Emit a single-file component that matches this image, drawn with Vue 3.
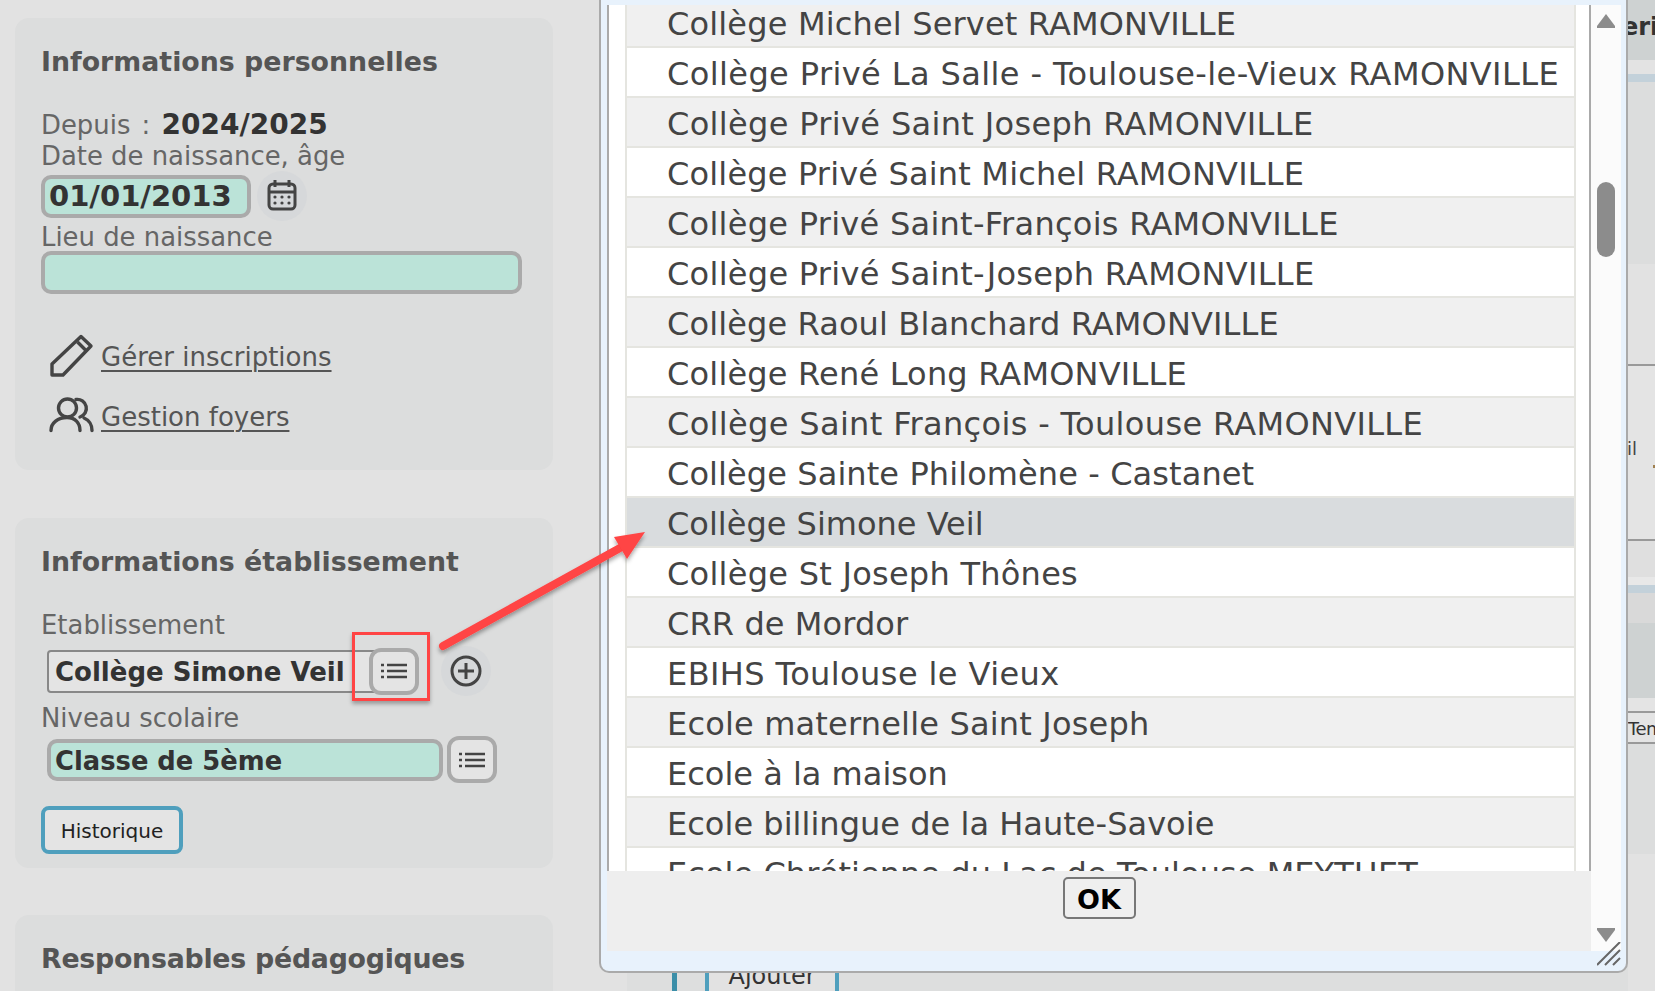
<script setup>
const rows = [
  ['Collège Michel Servet RAMONVILLE', 0.165],
  ['Collège Privé La Salle - Toulouse-le-Vieux RAMONVILLE', 0.4],
  ['Collège Privé Saint Joseph RAMONVILLE', 0.34],
  ['Collège Privé Saint Michel RAMONVILLE', 0.17],
  ['Collège Privé Saint-François RAMONVILLE', 0.27],
  ['Collège Privé Saint-Joseph RAMONVILLE', 0.28],
  ['Collège Raoul Blanchard RAMONVILLE', 0.12],
  ['Collège René Long RAMONVILLE', 0.19],
  ['Collège Saint François - Toulouse RAMONVILLE', 0.34],
  ['Collège Sainte Philomène - Castanet', 0.09],
  ['Collège Simone Veil', 0],
  ['Collège St Joseph Thônes', 0.26],
  ['CRR de Mordor', 0.1],
  ['EBIHS Toulouse le Vieux', 0.41],
  ['Ecole maternelle Saint Joseph', 0.18],
  ['Ecole à la maison', 0],
  ['Ecole billingue de la Haute-Savoie', 0.03],
  ['Ecole Chrétienne du Lac de Toulouse MEYTHET', 0.05]
].map(([name, spacing]) => ({ name, spacing }))
const selected = 'Collège Simone Veil'
</script>

<template>
  <div class="page">
    <aside class="left">
      <section class="card card-perso">
        <h2>Informations personnelles</h2>
        <div class="line depuis">Depuis : <b>2024/2025</b></div>
        <div class="line naissance">Date de naissance, âge</div>
        <div class="date-row">
          <div class="input green date">01/01/2013</div>
          <span class="round">
            <svg width="30" height="32" viewBox="0 1 30 32" fill="none" stroke="#444" stroke-width="3">
              <rect x="2" y="5" width="26" height="25" rx="4" />
              <path d="M8 1v7M22 1v7M2 13h26" />
              <g stroke="none" fill="#444">
                <circle cx="8" cy="18" r="1.6" /><circle cx="15" cy="18" r="1.6" /><circle cx="22" cy="18" r="1.6" />
                <circle cx="8" cy="24" r="1.6" /><circle cx="15" cy="24" r="1.6" /><circle cx="22" cy="24" r="1.6" />
              </g>
            </svg>
          </span>
        </div>
        <div class="line lieu">Lieu de naissance</div>
        <div class="input green wide"></div>
        <div class="link first">
          <svg width="48" height="48" viewBox="0 1 48 48" fill="none" stroke="#444" stroke-width="3.4" stroke-linejoin="round">
            <path d="M4 43V32L33 4.500L43 14L15 43Z" />
            <path d="M29.500 10L38 18.500" />
          </svg>
          <a>Gérer inscriptions</a>
        </div>
        <div class="link">
          <svg width="48" height="48" viewBox="0 -3 48 48" fill="none" stroke="#444" stroke-width="3.400" stroke-linecap="round">
            <circle cx="19.500" cy="12" r="9" />
            <path d="M3 34.500C3 27 10 21.500 19 21.500C27 21.500 32 27 32 34.500" />
            <path d="M28 3.500A9 9 0 0 1 32 21" />
            <path d="M36 22C41 24 44 29 44 34.500" />
          </svg>
          <a>Gestion foyers</a>
        </div>
      </section>

      <section class="card card-etab">
        <h2>Informations établissement</h2>
        <div class="line etab-label">Etablissement</div>
        <div class="etab-row">
          <div class="input plain">Collège Simone Veil</div>
          <button class="list-btn overlap">
            <svg width="26" height="16" viewBox="0 0 26 16" stroke="#444" stroke-width="2.400" fill="none">
              <path d="M6 2h20M6 8h20M6 14h20M0 2h3M0 8h3M0 14h3" />
            </svg>
          </button>
          <span class="round plus">
            <svg width="32" height="32" viewBox="0 0 32 32" fill="none" stroke="#444" stroke-width="3">
              <circle cx="16" cy="16" r="14" /><path d="M16 8v16M8 16h16" />
            </svg>
          </span>
        </div>
        <div class="line niveau">Niveau scolaire</div>
        <div class="niveau-row">
          <div class="input green level">Classe de 5ème</div>
          <button class="list-btn">
            <svg width="26" height="16" viewBox="0 0 26 16" stroke="#444" stroke-width="2.400" fill="none">
              <path d="M6 2h20M6 8h20M6 14h20M0 2h3M0 8h3M0 14h3" />
            </svg>
          </button>
        </div>
        <button class="histo">Historique</button>
      </section>

      <section class="card card-resp">
        <h2>Responsables pédagogiques</h2>
      </section>
    </aside>

    <main class="center">
      <div class="ajouter-row">
        <span class="teal"></span>
        <button class="ajouter">Ajouter</button>
      </div>
    </main>

    <div class="strip">
      <div class="b b1"><b>eri</b></div>
      <div class="b b2"></div>
      <div class="b b3"></div>
      <div class="b b4"></div>
      <div class="b b5"></div>
      <div class="b b6"><span class="il">il</span><i class="tick"></i></div>
      <div class="b b7"></div>
      <div class="b b8"></div>
      <div class="b b3"></div>
      <div class="b b9"></div>
      <div class="b b10"></div>
      <div class="b b11"></div>
      <div class="b b12">Tem</div>
      <div class="b b13"></div>
      <div class="b b14"></div>
    </div>

    <div class="modal">
      <div class="modal-main">
        <div class="list-box">
          <ul class="rows">
            <li
              v-for="r in rows"
              :key="r.name"
              :class="{ sel: r.name === selected }"
              :style="{ letterSpacing: r.spacing + 'px' }"
            >{{ r.name }}</li>
          </ul>
        </div>
        <div class="footer"><button class="ok">OK</button></div>
      </div>
      <div class="scroll">
        <span class="tri up"></span>
        <span class="thumb"></span>
        <span class="tri down"></span>
      </div>
      <svg class="grip" width="24" height="24" viewBox="0 0 24 24" stroke="#666" stroke-width="2">
        <path d="M0 23L23 0M8 23L23 8M16 23L23 16" />
      </svg>
    </div>

    <div class="red-box"></div>
    <svg class="arrow" width="240" height="150" viewBox="0 0 240 150">
      <defs>
        <filter id="sh" x="-10%" y="-10%" width="120%" height="130%">
          <feDropShadow dx="0" dy="3" stdDeviation="2" flood-color="#000" flood-opacity="0.35" />
        </filter>
      </defs>
      <g filter="url(#sh)" fill="#ff4444">
        <path d="M13 136L190 38" stroke="#ff4444" stroke-width="8" stroke-linecap="round" fill="none" />
        <path d="M215 22L184 27L197 49Z" />
      </g>
    </svg>
  </div>
</template>

<style>
html, body { margin: 0; padding: 0; background: #e2e2e2; }
</style>

<style scoped>
.page {
  position: relative;
  width: 1655px;
  height: 991px;
  overflow: hidden;
  display: flex;
  background: #e2e2e2;
  font-family: "DejaVu Sans", sans-serif;
  color: #666;
}
.left { width: 627px; flex: none; padding: 18px 0 0 15px; box-sizing: border-box; }
.card {
  width: 538px;
  background: #dcdddd;
  border-radius: 14px;
  box-sizing: border-box;
  padding: 26px 26px 0;
}
.card-perso { height: 452px; margin-bottom: 48px; }
.card-etab { height: 350px; margin-bottom: 47px; }
.card-resp { height: 200px; }
h2 { margin: 0; font-size: 26.8px; line-height: 36px; font-weight: 700; color: #555; }
.card-resp h2 { letter-spacing: -0.25px; }
.line { font-size: 25.9px; line-height: 32px; color: #666; }
.depuis { margin-top: 29px; word-spacing: 3px; }
.depuis b { color: #333; font-size: 28px; }
.naissance { line-height: 30px; }
.input {
  box-sizing: border-box;
  border: 4px solid #aaa;
  border-radius: 10px;
  font-weight: 700;
  font-size: 27px;
  color: #333;
}
.green { background: #bbe3d8; }
.date-row { display: flex; align-items: center; height: 50px; }
.date { width: 210px; height: 43px; line-height: 35px; padding-left: 4px; font-size: 29px; white-space: nowrap; }
.round {
  width: 50px; height: 50px; border-radius: 50%; background: #d6d8da;
  display: flex; align-items: center; justify-content: center; flex: none;
  margin-left: 6px;
}
.lieu { line-height: 30px; padding-top: 1px; margin-bottom: -1px; }
.wide { width: 481px; height: 43px; }
.link { display: flex; align-items: center; height: 48px; padding-left: 7px; font-size: 26px; }
.link a { text-decoration: underline; color: #555; margin-left: 5px; text-underline-offset: 4px; text-decoration-thickness: 2px; }
.link.first { margin-top: 39px; margin-bottom: 12px; }

.etab-label { margin-top: 29px; }
.etab-row { display: flex; align-items: center; padding-left: 6px; height: 50px; margin-top: 5px; }
.plain {
  width: 340px; height: 43px; border: 2px solid #888; border-radius: 4px;
  background: #e4e4e4; padding-left: 6px; line-height: 40px; font-size: 26px;
}
.list-btn {
  box-sizing: border-box; width: 50px; height: 47px; padding: 0;
  border: 4px solid #aaa; border-radius: 12px; background: #e4e4e4;
  display: flex; align-items: center; justify-content: center; flex: none;
}
.overlap { margin-left: -18px; position: relative; }
.plus { margin-left: 22px; }
.niveau { margin-top: 6px; }
.niveau-row { display: flex; align-items: center; padding-left: 6px; height: 47px; margin-top: 2px; gap: 4px; }
.level { width: 396px; height: 42px; line-height: 36px; padding-left: 4px; font-size: 25.8px; }
.histo {
  display: block; margin-top: 23px; width: 142px; height: 48px; box-sizing: border-box;
  border: 4px solid #4f9fbd; border-radius: 8px; background: #e4e4e4;
  font-family: "DejaVu Sans", sans-serif; font-size: 20px; color: #222; padding: 2px 0 0;
}

.center { flex: 1; background: #dddede; position: relative; display: flex; flex-direction: column; justify-content: flex-end; }
.ajouter-row { display: flex; height: 60px; margin-bottom: -20px; align-items: stretch; }
.teal { width: 5px; background: #3b8ea8; margin-left: 45px; }
.ajouter {
  margin-left: 28px; width: 134px; box-sizing: border-box; border: 4px solid #4f9fbd; border-bottom: 0;
  border-radius: 0; background: #e2e2e2; font-family: "DejaVu Sans", sans-serif; font-size: 24px; color: #333;
  padding: 0 0 14px;
}

.strip { width: 27px; flex: none; overflow: hidden; }
.b { box-sizing: border-box; white-space: nowrap; position: relative; }
.b1 { height: 60px; background: #ced2d2; font-size: 24px; color: #333; line-height: 54px; text-indent: -6px; }
.b2 { height: 14px; background: #e3e3e3; }
.b3 { height: 8px; background: #c3d1da; }
.b4 { height: 182px; background: #dcdddd; }
.b5 { height: 102px; background: #e2e2e2; border-bottom: 2px solid #999; }
.b6 { height: 175px; background: #e4e4e4; border-bottom: 2px solid #999; font-size: 18px; color: #444; }
.il { position: absolute; left: -1px; top: 72px; }
.tick { position: absolute; right: 0; top: 99px; width: 2px; height: 3px; background: #a08050; }
.b7 { height: 36px; background: #dfdfdf; }
.b8 { height: 8px; background: #e8e8e8; }
.b9 { height: 30px; background: #d9d9d9; }
.b10 { height: 75px; background: #ced2d2; }
.b11 { height: 15px; background: #e4e4e4; border-bottom: 2px solid #999; }
.b12 { height: 31px; background: #e4e4e4; border-bottom: 2px solid #999; font-size: 18px; line-height: 31px; color: #333; letter-spacing: -0.5px; }
.b13 { height: 110px; background: #dcdddd; }
.b14 { height: 137px; background: #e2e2e2; }

.modal {
  position: absolute; left: 599px; top: 0; width: 1029px; height: 973px;
  box-sizing: border-box; display: flex;
  border: 2px solid #aaa; border-top: 0; border-radius: 0 0 10px 10px;
  background: #e8f2fc; padding: 5px 5px 20px 6px;
}
.modal-main { width: 984px; display: flex; flex-direction: column; flex: none; }
.list-box {
  flex: 1; min-height: 0; overflow: hidden; background: #fff;
  border-left: 2px solid #aaa; border-right: 2px solid #aaa; padding: 0 13px 0 16px;
}
.rows {
  list-style: none; margin: -7px 0 0; padding: 0;
  border-left: 2px solid #e5e5e0; border-right: 2px solid #e5e5e0;
}
.rows li {
  box-sizing: border-box; height: 50px; line-height: 48px; padding: 2px 0 0 40px;
  border-bottom: 2px solid #e5e5e0; background: #fff;
  font-size: 32px; color: #444; white-space: nowrap;
}
.rows li:nth-child(odd) { background: #f0f0f0; }
.rows li.sel { background: #d9dcde; }
.footer {
  height: 80px; flex: none; background: #eee; display: flex; justify-content: center; align-items: flex-start;
  padding-top: 6px; box-sizing: border-box;
}
.ok {
  width: 73px; height: 42px; box-sizing: border-box; border: 2px solid #777; border-radius: 5px;
  background: #efefef; font-family: "DejaVu Sans", sans-serif; font-weight: 700; font-size: 27px; color: #000; padding: 2px 0 0;
}
.scroll {
  flex: 1; background: #fbfbfb; position: relative; display: flex; flex-direction: column; align-items: center;
  padding-top: 9px; box-sizing: border-box;
}
.tri { width: 18px; height: 14px; background: #8c8c8c; flex: none; }
.up { clip-path: polygon(50% 0, 100% 85%, 100% 100%, 0 100%, 0 85%); }
.down { clip-path: polygon(0 0, 100% 0, 100% 15%, 50% 100%, 0 15%); margin-top: 671px; }
.thumb { width: 18px; height: 75px; border-radius: 9px; background: #8c8c8c; margin-top: 154px; flex: none; }
.grip { position: absolute; right: 5px; bottom: 5px; }

.red-box {
  position: absolute; left: 352px; top: 632px; width: 78px; height: 69px; box-sizing: border-box;
  border: 3px solid #f44; box-shadow: 0 3px 4px rgba(0,0,0,.3);
}
.arrow { position: absolute; left: 430px; top: 510px; overflow: visible; }
</style>
